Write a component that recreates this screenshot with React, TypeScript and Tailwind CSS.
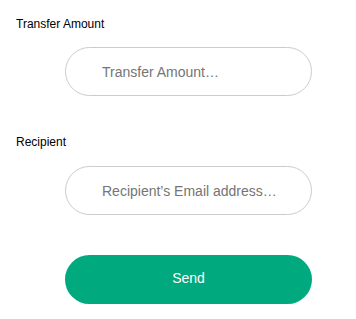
export default function App() {
  return (
    <div className="flex flex-col px-4 pt-[17px] font-['Liberation_Sans',Arial,sans-serif] bg-white">
      <label className="text-xs leading-[14px] text-black">Transfer Amount</label>
      <input
        type="text"
        placeholder="Transfer Amount…"
        className="mt-4 ml-[49px] w-[247px] h-[49px] rounded-full border border-[#cccccc] pl-9 pr-4 text-sm text-gray-700 placeholder:text-[#757575] outline-none"
      />
      <label className="mt-[39px] text-xs leading-[14px] text-black">Recipient</label>
      <input
        type="email"
        placeholder="Recipient’s Email address…"
        className="mt-[17px] ml-[49px] w-[247px] h-[49px] rounded-full border border-[#cccccc] pl-9 pr-4 text-sm text-gray-700 placeholder:text-[#757575] outline-none"
      />
      <button className="mt-10 ml-[49px] w-[247px] h-[49px] rounded-full bg-[#00a97e] pb-[3px] text-sm text-white">
        Send
      </button>
    </div>
  )
}
